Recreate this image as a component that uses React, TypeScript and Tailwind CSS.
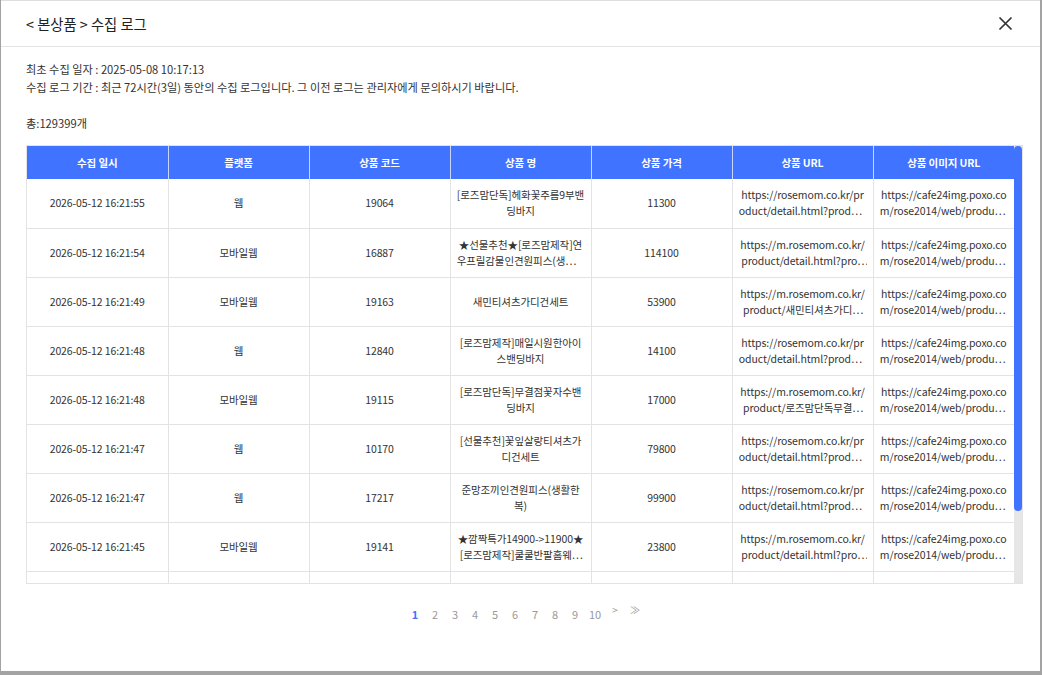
import React from "react";

interface LogRow {
  date: string;
  platform: string;
  code: string;
  name: string;
  price: string;
  url: string;
  image: string;
}

const rows: LogRow[] = [
  {
    date: "2026-05-12 16:21:55",
    platform: "웹",
    code: "19064",
    name: "[로즈맘단독]헤화꽃주름9부밴딩바지",
    price: "11300",
    url: "https://rosemom.co.kr/product/detail.html?product_no=19064",
    image: "https://cafe24img.poxo.com/rose2014/web/product/big/19064.jpg",
  },
  {
    date: "2026-05-12 16:21:54",
    platform: "모바일웹",
    code: "16887",
    name: "★선물추천★[로즈맘제작]연우프릴감물인견원피스(생활한복)",
    price: "114100",
    url: "https://m.rosemom.co.kr/product/detail.html?product_no=16887",
    image: "https://cafe24img.poxo.com/rose2014/web/product/big/16887.jpg",
  },
  {
    date: "2026-05-12 16:21:49",
    platform: "모바일웹",
    code: "19163",
    name: "새민티셔츠가디건세트",
    price: "53900",
    url: "https://m.rosemom.co.kr/product/새민티셔츠가디건세트/19163/",
    image: "https://cafe24img.poxo.com/rose2014/web/product/big/19163.jpg",
  },
  {
    date: "2026-05-12 16:21:48",
    platform: "웹",
    code: "12840",
    name: "[로즈맘제작]매일시원한아이스밴딩바지",
    price: "14100",
    url: "https://rosemom.co.kr/product/detail.html?product_no=12840",
    image: "https://cafe24img.poxo.com/rose2014/web/product/big/12840.jpg",
  },
  {
    date: "2026-05-12 16:21:48",
    platform: "모바일웹",
    code: "19115",
    name: "[로즈맘단독]무결점꽃자수밴딩바지",
    price: "17000",
    url: "https://m.rosemom.co.kr/product/로즈맘단독무결점꽃자수밴딩바지/19115/",
    image: "https://cafe24img.poxo.com/rose2014/web/product/big/19115.jpg",
  },
  {
    date: "2026-05-12 16:21:47",
    platform: "웹",
    code: "10170",
    name: "[선물추천]꽃잎살랑티셔츠가디건세트",
    price: "79800",
    url: "https://rosemom.co.kr/product/detail.html?product_no=10170",
    image: "https://cafe24img.poxo.com/rose2014/web/product/big/10170.jpg",
  },
  {
    date: "2026-05-12 16:21:47",
    platform: "웹",
    code: "17217",
    name: "준망조끼인견원피스(생활한복)",
    price: "99900",
    url: "https://rosemom.co.kr/product/detail.html?product_no=17217",
    image: "https://cafe24img.poxo.com/rose2014/web/product/big/17217.jpg",
  },
  {
    date: "2026-05-12 16:21:45",
    platform: "모바일웹",
    code: "19141",
    name: "★깜짝특가14900->11900★[로즈맘제작]쿨쿨반팔홈웨어세트",
    price: "23800",
    url: "https://m.rosemom.co.kr/product/detail.html?product_no=19141",
    image: "https://cafe24img.poxo.com/rose2014/web/product/big/19141.jpg",
  },
  {
    date: "2026-05-12 16:21:44",
    platform: "웹",
    code: "18820",
    name: "[로즈맘제작]시원한린넨와이드팬츠",
    price: "25900",
    url: "https://rosemom.co.kr/product/detail.html?product_no=18820",
    image: "https://cafe24img.poxo.com/rose2014/web/product/big/18820.jpg",
  },
];

const columns = ["수집 일시", "플랫폼", "상품 코드", "상품 명", "상품 가격", "상품 URL", "상품 이미지 URL"];

function Cell({ children }: { children: React.ReactNode }) {
  return (
    <td className="w-[141px] h-[49px] border-r border-b border-[#e3e3e3] px-[6px] text-center align-middle last:border-r-0">
      <div className="line-clamp-2 break-all leading-[16px] [font-feature-settings:'pwid']">{children}</div>
    </td>
  );
}

export default function App() {
  return (
    <div
      className="w-[1042px] h-[675px] bg-[#a3a3a3] pl-px pr-[2px] pb-[4px]"
      style={{ fontFamily: '"Noto Sans CJK KR", "Noto Sans", sans-serif' }}
    >
      <div className="h-full bg-white border-t border-[#dedede] flex flex-col">
        <div className="h-[46px] flex items-center justify-between pl-[25px] pr-[27px] border-b border-[#e3e3e3] shrink-0">
          <span className="text-[14.3px] text-[#222]">&lt; 본상품 &gt; 수집 로그</span>
          <button className="w-[16px] h-[16px] flex items-center justify-center">
            <svg width="15" height="15" viewBox="0 0 15 15" fill="none">
              <path d="M1.5 1.5 L13.5 13.5 M13.5 1.5 L1.5 13.5" stroke="#333" strokeWidth="1.7" />
            </svg>
          </button>
        </div>

        <div className="pl-[25px] pt-[13px] text-[11.2px] leading-[18px] text-[#333]">
          <p>최초 수집 일자 : 2025-05-08 10:17:13</p>
          <p>수집 로그 기간 : 최근 72시간(3일) 동안의 수집 로그입니다. 그 이전 로그는 관리자에게 문의하시기 바랍니다.</p>
          <p>&nbsp;</p>
          <p>총:129399개</p>

          <div className="mt-[13px] w-[997px] h-[439px] border border-[#e3e3e3] flex overflow-hidden">
            <div className="w-[987px] overflow-hidden">
              <table className="w-[987px] table-fixed border-collapse text-[10.5px] tracking-[-0.1px] text-[#333]">
                <thead>
                  <tr className="bg-[#4073ff] h-[33px]">
                    {columns.map((c) => (
                      <th
                        key={c}
                        className="w-[141px] border-r border-[#c9d6ff] last:border-r-0 text-white font-bold text-center"
                      >
                        {c}
                      </th>
                    ))}
                  </tr>
                </thead>
                <tbody>
                  {rows.map((r, i) => (
                    <tr key={i}>
                      <Cell>{r.date}</Cell>
                      <Cell>{r.platform}</Cell>
                      <Cell>{r.code}</Cell>
                      <Cell>{r.name}</Cell>
                      <Cell>{r.price}</Cell>
                      <Cell>{r.url}</Cell>
                      <Cell>{r.image}</Cell>
                    </tr>
                  ))}
                </tbody>
              </table>
            </div>
            <div className="w-[8px] bg-[#e6e6e6] shrink-0">
              <div className="h-[365px] bg-[#4073ff] rounded-[4px]" />
            </div>
          </div>
        </div>

        <div className="mt-[22px] flex justify-center items-start pl-[9px] text-[11px] leading-[16px] text-[#999]">
          <span className="w-[20px] text-center text-[#4073ff] font-bold">1</span>
          {["2", "3", "4", "5", "6", "7", "8", "9", "10"].map((n) => (
            <span key={n} className="w-[20px] text-center">
              {n}
            </span>
          ))}
          <span className="w-[20px] text-center -mt-[4px] text-[10px]">&gt;</span>
          <span className="w-[20px] text-center -mt-[4px] text-[10px]">≫</span>
        </div>
      </div>
    </div>
  );
}
